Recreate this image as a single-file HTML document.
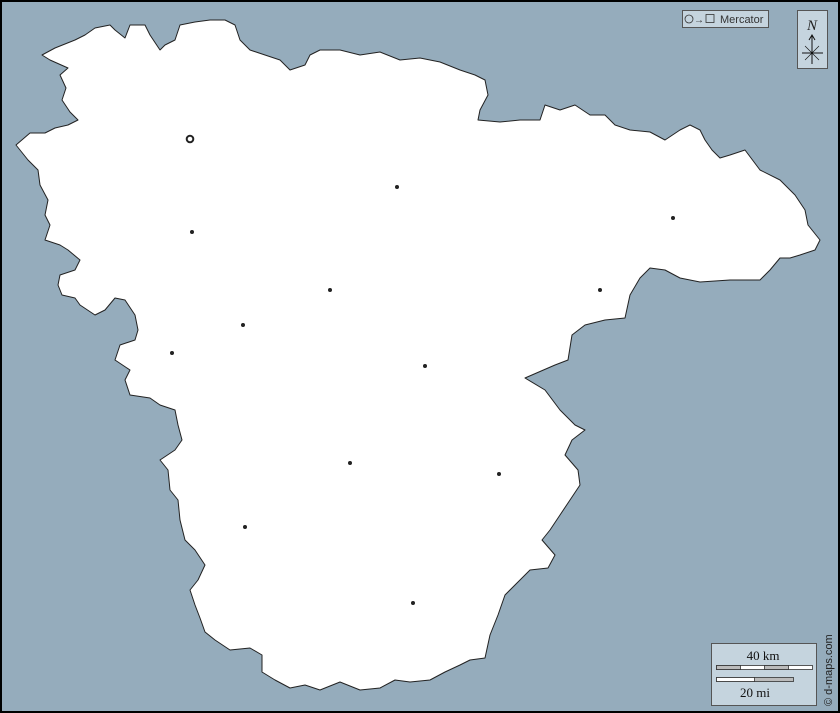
<!DOCTYPE html>
<html><head><meta charset="utf-8"><style>
html,body{margin:0;padding:0;width:840px;height:713px;overflow:hidden;background:#000;}
svg{display:block}
</style></head><body>
<svg width="840" height="713" viewBox="0 0 840 713" xmlns="http://www.w3.org/2000/svg">
<rect x="0" y="0" width="840" height="713" fill="#000"/>
<rect x="2" y="2" width="836" height="709" fill="#95acbc"/>
<polygon fill="#fff" stroke="#222" stroke-width="1" stroke-linejoin="round" points="16,145 30,133 45,133 55,128 68,125 78,120 70,112 62,100 66,88 60,75 68,68 50,60 42,55 55,48 75,40 85,35 95,28 110,25 115,30 125,38 130,25 145,25 150,35 160,50 165,45 175,40 180,25 195,22 210,20 225,20 235,25 240,40 250,50 265,55 280,60 290,70 305,65 310,55 320,50 340,50 360,55 380,52 400,60 420,58 440,62 460,70 475,75 485,80 488,95 480,110 478,120 500,122 520,120 540,120 545,105 560,110 575,105 590,115 605,115 615,125 630,130 650,132 665,140 680,130 690,125 700,130 705,140 712,150 720,158 730,155 745,150 760,170 780,180 795,195 805,210 808,225 820,240 815,250 800,255 790,258 780,258 770,270 760,280 730,280 700,282 680,278 665,270 650,268 640,278 630,295 625,318 605,320 585,325 572,335 568,360 555,365 525,378 545,390 560,410 575,425 585,430 572,440 565,455 578,470 580,485 570,500 560,515 550,530 542,540 555,555 548,568 530,570 520,580 505,595 498,615 490,635 485,658 470,660 460,665 445,672 430,680 410,682 395,680 380,688 360,690 340,682 320,690 305,685 290,688 275,680 262,672 262,655 250,648 230,650 215,640 205,632 200,618 195,605 190,590 198,580 205,565 195,550 185,540 180,520 178,500 170,490 168,470 160,460 175,450 182,440 178,425 175,410 160,405 150,398 130,395 125,380 130,370 115,360 120,345 135,340 138,330 135,315 125,300 115,298 105,310 95,315 80,305 75,298 62,295 58,285 60,275 75,270 80,260 68,250 60,245 45,240 50,225 45,215 48,200 40,185 38,170 28,160"/>
<g fill="#222">
<circle cx="397" cy="187" r="2"/><circle cx="192" cy="232" r="2"/><circle cx="673" cy="218" r="2"/>
<circle cx="330" cy="290" r="2"/><circle cx="600" cy="290" r="2"/><circle cx="243" cy="325" r="2"/>
<circle cx="172" cy="353" r="2"/><circle cx="425" cy="366" r="2"/><circle cx="350" cy="463" r="2"/>
<circle cx="499" cy="474" r="2"/><circle cx="245" cy="527" r="2"/><circle cx="413" cy="603" r="2"/>
</g>
<circle cx="190" cy="139" r="3.3" fill="#fff" stroke="#222" stroke-width="2"/>
<rect x="682.5" y="10.5" width="86" height="17" fill="#c5d4de" stroke="#555"/>
<circle cx="689" cy="19" r="4" fill="none" stroke="#333" stroke-width="0.8"/>
<text x="694" y="23" font-family="Liberation Sans,sans-serif" font-size="10" fill="#333">→</text>
<rect x="706" y="14.5" width="8" height="8" fill="none" stroke="#333" stroke-width="0.8"/>
<text x="720" y="23" font-family="Liberation Sans,sans-serif" font-size="11" fill="#333">Mercator</text>
<rect x="797.5" y="10.5" width="30" height="58" fill="#c5d4de" stroke="#555"/>
<text x="812" y="30" text-anchor="middle" font-family="Liberation Serif,serif" font-style="italic" font-size="15" fill="#222">N</text>
<line x1="812" y1="36" x2="812" y2="64" stroke="#111" stroke-width="1"/>
<path d="M809,40 L812,35 L815,40" fill="none" stroke="#111"/>
<line x1="802" y1="53" x2="823" y2="53" stroke="#111"/>
<line x1="805" y1="46" x2="819" y2="60" stroke="#111" stroke-width="0.6"/>
<line x1="819" y1="46" x2="805" y2="60" stroke="#111" stroke-width="0.6"/>
<rect x="711.5" y="643.5" width="105" height="62" fill="#c5d4de" stroke="#555"/>
<text x="763" y="660" text-anchor="middle" font-family="Liberation Serif,serif" font-size="13" fill="#111">40 km</text>
<rect x="716.5" y="665.5" width="96" height="4" fill="#fff" stroke="#333" stroke-width="0.8"/>
<rect x="716.5" y="665.5" width="24" height="4" fill="#bbb" stroke="#333" stroke-width="0.8"/>
<rect x="764.5" y="665.5" width="24" height="4" fill="#bbb" stroke="#333" stroke-width="0.8"/>
<rect x="716.5" y="677.5" width="77" height="4" fill="#bbb" stroke="#333" stroke-width="0.8"/>
<rect x="716.5" y="677.5" width="38" height="4" fill="#fff" stroke="#333" stroke-width="0.8"/>
<text x="755" y="697" text-anchor="middle" font-family="Liberation Serif,serif" font-size="13" fill="#111">20 mi</text>
<text transform="translate(832,706) rotate(-90)" font-family="Liberation Sans,sans-serif" font-size="11" fill="#222">© d-maps.com</text>
</svg>
</body></html>
